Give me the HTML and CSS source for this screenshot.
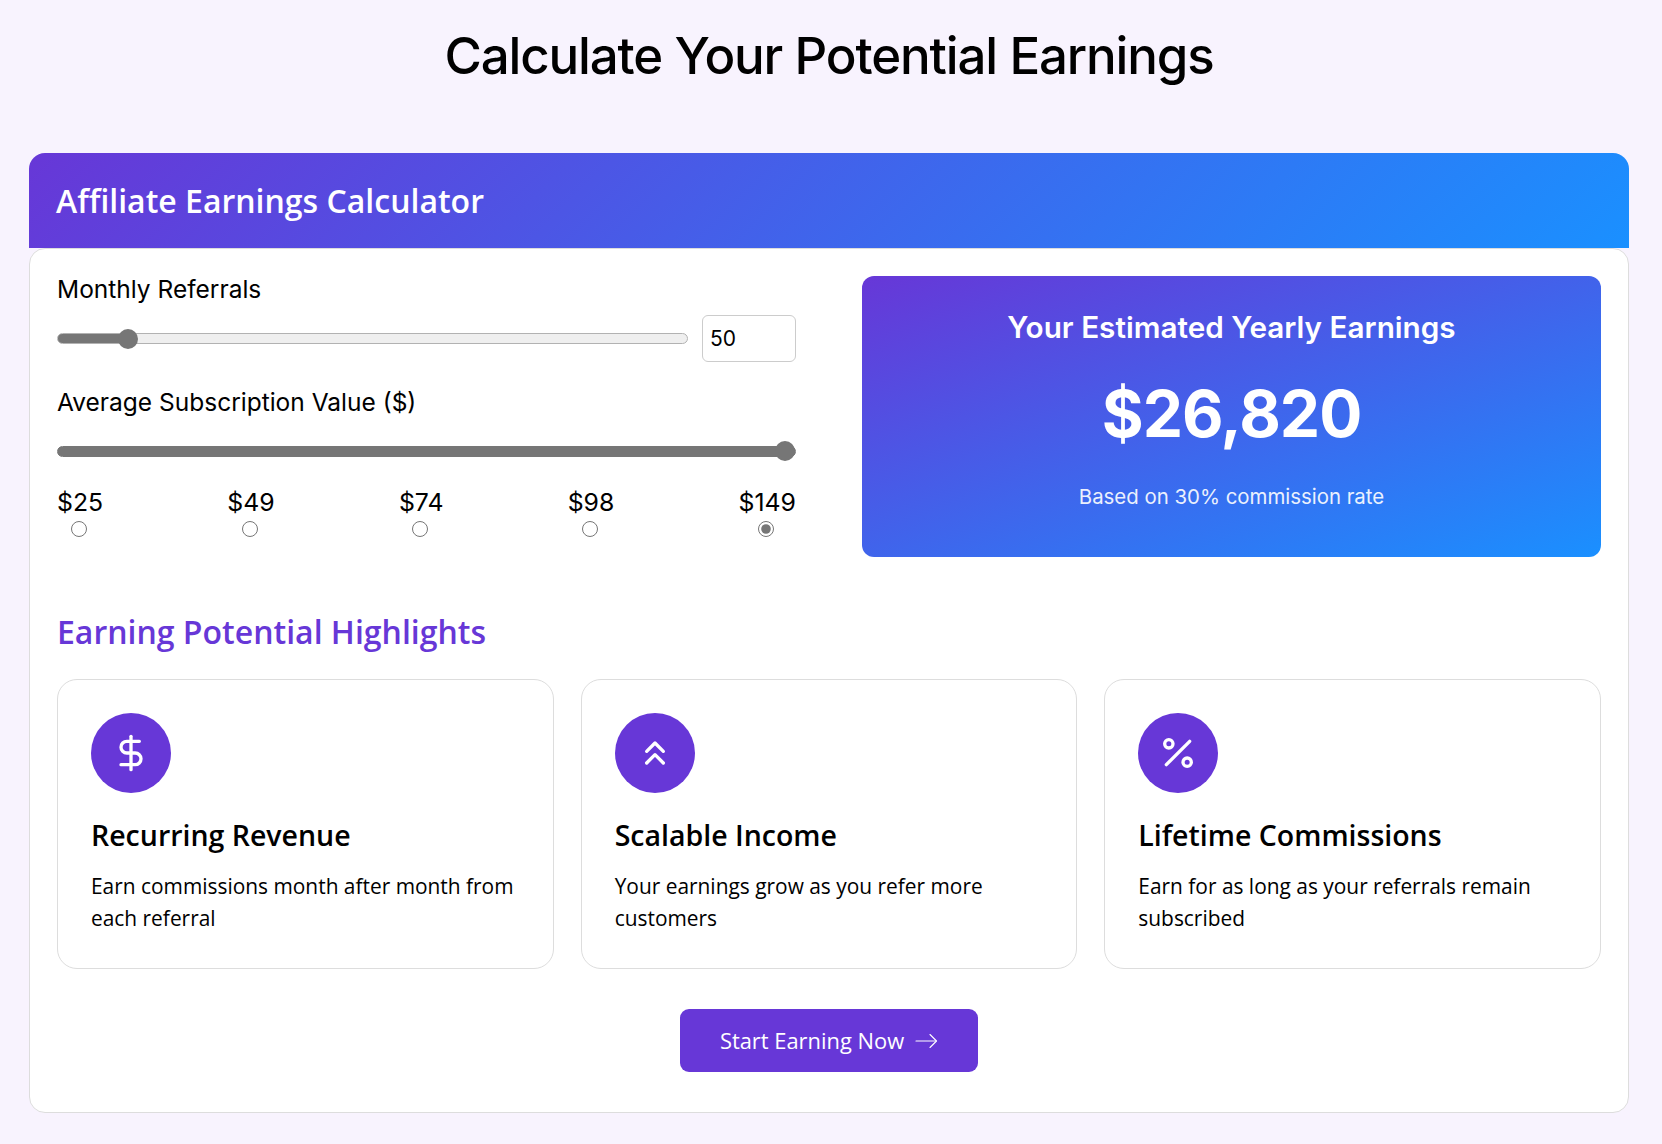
FILE: index.html
```html
<!DOCTYPE html>
<html lang="en">
  <head>
    <meta charset="UTF-8" />
    <title>Calculate Your Potential Earnings</title>
    <link rel="stylesheet" href="styles.css">
  </head>
  <body>
    <h1 class="page-title">Calculate Your Potential Earnings</h1>
    <section class="calculator">
      <div class="calc-header">
        <h2>Affiliate Earnings Calculator</h2>
      </div>
      <div class="calc-body">
        <div class="calc-top">
          <div class="calc-inputs">
            <label class="field-label" for="referrals">Monthly Referrals</label>
            <div class="slider-row">
              <input type="range" id="referrals" class="slider" min="1" max="500" value="50" style="--fill: 11%" />
              <input type="text" class="number-input" value="50" />
            </div>
            <label class="field-label field-label-second" for="subscription">Average Subscription Value ($)</label>
            <input type="range" id="subscription" class="slider slider-full" min="0" max="4" value="4" style="--fill: 100%" />
            <div class="price-options">
              <label class="price-option">$25<input type="radio" name="price" /></label>
              <label class="price-option">$49<input type="radio" name="price" /></label>
              <label class="price-option">$74<input type="radio" name="price" /></label>
              <label class="price-option">$98<input type="radio" name="price" /></label>
              <label class="price-option">$149<input type="radio" name="price" checked /></label>
            </div>
          </div>
          <div class="result-box">
            <h3>Your Estimated Yearly Earnings</h3>
            <div class="result-amount">$26,820</div>
            <p>Based on 30% commission rate</p>
          </div>
        </div>

        <h2 class="highlights-title">Earning Potential Highlights</h2>
        <div class="highlights">
          <div class="highlight-card">
            <div class="highlight-icon">
              <svg viewBox="0 0 24 24"><path d="M12 2v20" /><path d="M17 5H9.500a3.500 3.500 0 0 0 0 7h5a3.500 3.500 0 0 1 0 7H6" /></svg>
            </div>
            <h4>Recurring Revenue</h4>
            <p>Earn commissions month after month from each referral</p>
          </div>
          <div class="highlight-card">
            <div class="highlight-icon">
              <svg viewBox="0 0 24 24"><path d="m17 11-5-5-5 5" /><path d="m17 18-5-5-5 5" /></svg>
            </div>
            <h4>Scalable Income</h4>
            <p>Your earnings grow as you refer more customers</p>
          </div>
          <div class="highlight-card">
            <div class="highlight-icon">
              <svg viewBox="0 0 24 24"><path d="M19 5 5 19" /><circle cx="6.500" cy="6.500" r="2.500" /><circle cx="17.500" cy="17.500" r="2.500" /></svg>
            </div>
            <h4>Lifetime Commissions</h4>
            <p>Earn for as long as your referrals remain subscribed</p>
          </div>
        </div>

        <div class="cta-row">
          <button type="button" class="btn">
            Start Earning Now
            <svg viewBox="0 0 24 24"><path d="M2 12h20" /><path d="m16 5.500 6.500 6.500-6.500 6.500" /></svg>
          </button>
        </div>
      </div>
    </section>
  </body>
</html>
```

FILE: styles.css
```css
* {
  box-sizing: border-box;
}
body {
  font-family: Inter, "Liberation Sans", sans-serif;
  background: #f8f3fe;
  color: #000000;
  margin: 0;
  padding: 0 33px 32px 29px;
}
.page-title {
  font-size: 51px;
  font-weight: 500;
  line-height: 62px;
  letter-spacing: -1.150px;
  text-align: center;
  margin: 0;
  padding: 25px 0 66px;
}
.calc-header {
  background: linear-gradient(135deg, #6737d7, #1a90ff);
  border-radius: 16px 16px 0 0;
  height: 95px;
  padding: 0 27px;
  display: flex;
  align-items: center;
}
.calc-header h2 {
  font-family: "Open Sans", sans-serif;
  color: #ffffff;
  font-size: 32px;
  font-weight: 600;
  margin: 0;
}
.calc-body {
  background: #ffffff;
  border: 1px solid #dddddd;
  border-radius: 16px;
  padding: 27px;
  height: 865px;
}
.calc-top {
  display: grid;
  grid-template-columns: 739px 739px;
  gap: 66px;
}
.field-label {
  display: block;
  font-size: 24.500px;
  line-height: 26px;
}
.slider-row {
  display: flex;
  align-items: center;
  gap: 14px;
  margin-top: 13px;
}
.slider {
  -webkit-appearance: none;
  appearance: none;
  display: block;
  flex: 1;
  width: 100%;
  height: 20px;
  margin: 0;
  background: transparent;
}
.slider::-webkit-slider-runnable-track {
  height: 11px;
  border-radius: 6px;
  border: 1px solid #b2b2b2;
  background: linear-gradient(to right, #767676 var(--fill), #efefef var(--fill));
}
.slider::-webkit-slider-thumb {
  -webkit-appearance: none;
  width: 20px;
  height: 20px;
  margin-top: -5.500px;
  border-radius: 50%;
  background: #767676;
}
.slider-full::-webkit-slider-runnable-track {
  border-color: #767676;
}
.number-input {
  width: 94px;
  height: 47px;
  border: 1px solid #cccccc;
  border-radius: 6px;
  padding: 0 7px;
  font-family: Inter, sans-serif;
  font-size: 21px;
  color: #000000;
}
.field-label-second {
  margin-top: 27px;
}
.slider-full {
  margin-top: 26px;
}
.price-options {
  display: flex;
  justify-content: space-between;
  margin-top: 27px;
}
.price-option {
  display: flex;
  flex-direction: column;
  align-items: center;
  font-size: 24.800px;
  line-height: 28px;
}
.price-option input {
  width: 16px;
  height: 16px;
  margin: 5px 2px 0 0;
  accent-color: #767676;
}
.result-box {
  background: linear-gradient(160deg, #6737d7, #1a90ff);
  border-radius: 12px;
  color: #ffffff;
  height: 281px;
  text-align: center;
  padding-top: 32px;
}
.result-box h3 {
  font-size: 29.700px;
  font-weight: 600;
  line-height: 38px;
  margin: 0;
}
.result-amount {
  font-size: 64px;
  font-weight: 700;
  line-height: 78px;
  letter-spacing: -1px;
  margin-top: 29px;
}
.result-box p {
  font-size: 20.400px;
  line-height: 28px;
  margin: 30px 0 0;
  opacity: 0.9;
}
.highlights-title {
  font-family: "Open Sans", sans-serif;
  color: #6737d7;
  font-size: 32px;
  font-weight: 600;
  line-height: 40px;
  margin: 55px 0 27px;
}
.highlights {
  display: grid;
  grid-template-columns: repeat(3, 1fr);
  gap: 27px;
}
.highlight-card {
  border: 1px solid #dddddd;
  border-radius: 20px;
  height: 290px;
  padding: 33px;
  font-family: "Open Sans", sans-serif;
}
.highlight-icon {
  width: 80px;
  height: 80px;
  border-radius: 50%;
  background: #6737d7;
  display: flex;
  align-items: center;
  justify-content: center;
}
.highlight-icon svg {
  width: 40px;
  height: 40px;
  fill: none;
  stroke: #ffffff;
  stroke-width: 2;
  stroke-linecap: round;
  stroke-linejoin: round;
}
.highlight-card h4 {
  font-size: 28.500px;
  font-weight: 600;
  line-height: 36px;
  margin: 24px 0 0;
}
.highlight-card p {
  font-size: 20.900px;
  line-height: 32px;
  margin: 17px 0 0;
}
.cta-row {
  display: flex;
  justify-content: center;
  margin-top: 40px;
}
.btn {
  display: flex;
  align-items: center;
  justify-content: center;
  gap: 10px;
  width: 298px;
  height: 63px;
  background: #6737d7;
  color: #ffffff;
  border: none;
  border-radius: 9px;
  font-family: "Open Sans", sans-serif;
  font-size: 21.900px;
  cursor: pointer;
}
.btn svg {
  width: 24px;
  height: 24px;
  fill: none;
  stroke: #ffffff;
  stroke-width: 1.100;
  stroke-linecap: round;
  stroke-linejoin: round;
}
```
